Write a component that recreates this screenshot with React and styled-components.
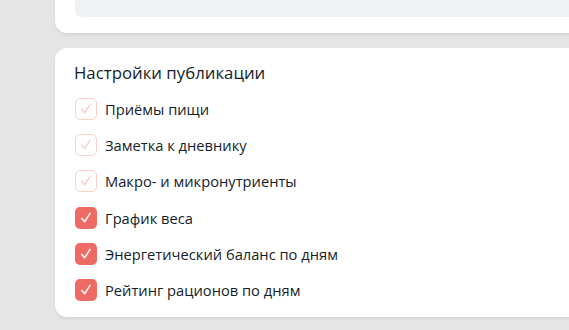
import React from 'react';
import styled, { createGlobalStyle } from 'styled-components';

const Global = createGlobalStyle`
  html, body { margin:0; padding:0; background:#e5e5e5; overflow:hidden; }
  body { font-family: "Open Sans", "Noto Sans", sans-serif; color:#141e29; }
`;

const Page = styled.div`
  width:100%;height:330px;overflow:hidden;
  padding-left:55px;box-sizing:border-box;
  display:flex;flex-direction:column;row-gap:15px;
`;

const Card = styled.div`
  width:640px;background:#fff;border-radius:12px;
  box-shadow:0 2px 3px rgba(0,0,0,0.07);box-sizing:border-box;
  padding:${p => p.$pad};
  margin-top:${p => p.$shift || '0'};
  flex-shrink:0;
`;

const Note = styled.div`
  background:#f0f1f3;border-radius:7px;padding:0 13px 15px;
  font-size:13px;line-height:20px;color:#3a4654;white-space:nowrap;
  & a{color:#2a68c4;text-decoration:none;}
`;

const Title = styled.div`
  font-size:16.8px;line-height:24px;color:#141e29;margin-bottom:6px;margin-left:-1px;
`;

const Row = styled.label`
  display:flex;align-items:center;column-gap:8px;height:36.2px;
  font-size:14.7px;color:#141e29;
`;

const Box = styled.span`
  width:22px;height:22px;border-radius:5px;box-sizing:border-box;flex-shrink:0;
  display:flex;align-items:center;justify-content:center;
  background:${p => (p.$on ? '#ee6b65' : '#fff')};
  border:${p => (p.$on ? 'none' : '1.5px solid #fbd0ce')};
`;

const Check = ({ on }) => (
  <svg width="14" height="14" viewBox="0 0 14 14" fill="none">
    <path d="M2.8 7.4 L5.6 10.8 L11 2.4" stroke={on ? '#fff' : '#fbcfcd'} strokeWidth="1.5" strokeLinecap="round" strokeLinejoin="round" />
  </svg>
);

const items = [
  { label: 'Приёмы пищи', on: false },
  { label: 'Заметка к дневнику', on: false },
  { label: 'Макро- и микронутриенты', on: false },
  { label: 'График веса', on: true },
  { label: 'Энергетический баланс по дням', on: true },
  { label: 'Рейтинг рационов по дням', on: true },
];

export default function App() {
  return (
    <>
      <Global />
      <Page>
        <Card $pad="0 20px 16px" $shift="-18px">
          <Note><a href="#">Ссылка</a> будет доступна специалисту и друзьям после публикации дневника</Note>
        </Card>
        <Card $pad="13px 20px 9px">
          <Title>Настройки публикации</Title>
          {items.map((it, i) => (
            <Row key={i}>
              <Box $on={it.on}><Check on={it.on} /></Box>
              {it.label}
            </Row>
          ))}
        </Card>
      </Page>
    </>
  );
}
